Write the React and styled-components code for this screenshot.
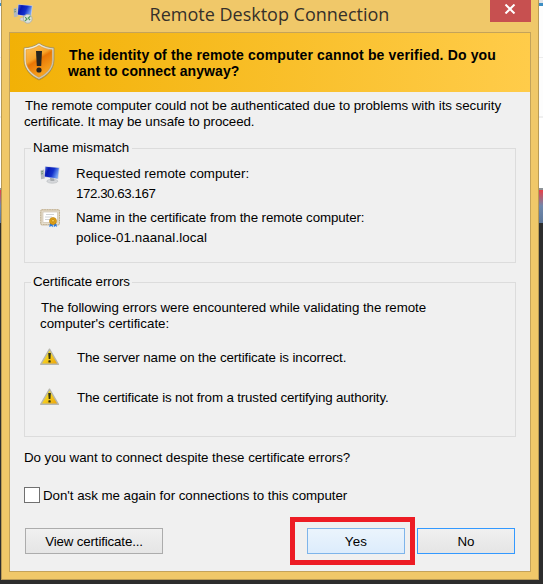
import React from "react";
import styled, { createGlobalStyle } from "styled-components";

const GlobalStyle = createGlobalStyle`
  * { box-sizing: border-box; }
  html, body { margin: 0; padding: 0; overflow: hidden; }
  body { font: 13.33px/16px "Liberation Sans", Arial, sans-serif; color: #000; }
`;

const Desktop = styled.div`
  width: 543px;
  height: 584px;
  display: flex;
  padding: 0 4px 4px 1px;
  background: linear-gradient(
    #dfe3e8 0 3px, #3d8fc4 3px 6px, #fdfdfd 6px 57px, #ececec 57px 58px,
    #fdfdfd 58px 116px, #efefef 116px 118px, #ffffff 118px 188px,
    #8f9498 188px 190px, #e84048 190px, #7088ac 206px, #5f7798 223px,
    #2d2d2d 223px
  );
`;

const Frame = styled.div`
  width: 538px;
  height: 580px;
  display: flex;
  flex-direction: column;
  padding: 0 7px 7px;
  border: 1px solid #b89a55;
  border-top: 0;
  background: #f0c869;
`;

const TitleBar = styled.header`
  height: 32px;
  display: flex;
  align-items: flex-start;
  justify-content: space-between;
  padding-left: 4px;
`;

const Title = styled.h1`
  margin: 2px 0 0 16px;
  font: 400 18px/24px "Open Sans", "Noto Sans", sans-serif;
  color: #35302a;
  white-space: nowrap;
`;

const CloseButton = styled.button`
  width: 41px;
  height: 22px;
  padding: 0 0 5px;
  border: 0;
  display: flex;
  align-items: center;
  justify-content: center;
  background: #c75050;
`;

const Content = styled.main`
  flex: 1;
  display: flex;
  flex-direction: column;
  border: 1px solid #c4a35a;
  background: #f0f0f0;
`;

const Banner = styled.div`
  height: 59px;
  display: flex;
  padding: 9px 0 0 12px;
  background: linear-gradient(90deg, #f2b106, #ffcc4a);
`;

const BannerText = styled.div`
  padding: 5px 0 0 12px;
  font-size: 14px;
  font-weight: 700;
`;

const Line = styled.div`
  height: 16px;
  white-space: nowrap;
  letter-spacing: ${(p) => p.$track || 0}px;
  margin-left: ${(p) => p.$indent || 0}px;
`;

const Body = styled.div`
  flex: 1;
  display: flex;
  flex-direction: column;
  padding: 6px 14px 0;
`;

const Group = styled.fieldset`
  width: 492px;
  height: ${(p) => p.$height}px;
  margin: ${(p) => p.$gap}px 0 0;
  padding: 11px 15px 0;
  border: 1px solid #dcdcdc;
`;

const Legend = styled.legend`
  height: 14px;
  width: 101px;
  margin-left: -9px;
  padding-left: 2px;
  line-height: 14px;
  white-space: nowrap;
  letter-spacing: ${(p) => p.$track || 0}px;
`;

const Entry = styled.div`
  display: flex;
  height: ${(p) => p.$height}px;
  gap: 16px;
`;

const EntryText = styled.div`
  display: flex;
  flex-direction: column;
  gap: 4px;
`;

const ErrorList = styled.div`
  margin-top: 18px;
`;

const Question = styled.div`
  margin-top: 13px;
`;

const CheckRow = styled.label`
  display: flex;
  align-items: flex-start;
  gap: 3px;
  height: 17px;
  margin-top: 21px;
`;

const CheckText = styled(Line)`
  margin-top: 1px;
`;

const CheckBox = styled.input`
  appearance: none;
  width: 16px;
  height: 16px;
  margin: 0;
  border: 1px solid #707070;
  background: #fff;
`;

const Actions = styled.footer`
  display: flex;
  align-items: center;
  height: 48px;
  margin-top: 13px;
  padding-left: 1px;
`;

const Button = styled.button`
  width: ${(p) => p.$width}px;
  height: 26px;
  padding: 2px 0 0;
  font: inherit;
  color: #000;
  letter-spacing: ${(p) => p.$track || 0}px;
  border: 1px solid ${(p) => (p.$hot ? "#7eb4ea" : p.$focus ? "#3399ff" : "#acacac")};
  background: ${(p) => (p.$hot ? "linear-gradient(#ebf4fc, #dcecfc)" : "linear-gradient(#f0f0f0, #e5e5e5)")};
`;

const Highlight = styled.div`
  width: 125px;
  height: 48px;
  margin: 0 2px 0 127px;
  border: 5px solid #ed1c24;
  display: flex;
  align-items: center;
  padding-left: 12px;
`;

const Icon = styled.svg`
  display: block;
  flex: none;
  margin-top: ${(p) => p.$top || 0}px;
`;

function ComputerArt({ id }) {
  return (
    <>
      <defs>
        <linearGradient id={id} x1="0" y1="0" x2="1" y2=".35">
          <stop offset="0" stopColor="#4a66d8" />
          <stop offset=".3" stopColor="#0718b4" />
          <stop offset=".65" stopColor="#1230cc" />
          <stop offset="1" stopColor="#6f9cf0" />
        </linearGradient>
      </defs>
      <path d="M.5 4.500l3.500-1 .8 9-3.800.8z" fill="#b4b8bc" />
      <path d="M1 6l2-.5M1 8l2-.5" stroke="#6f9679" />
      <ellipse cx="12.300" cy="15.200" rx="5.500" ry="2" fill="#d5d7da" stroke="#b7babd" strokeWidth=".6" />
      <path d="M10 12h4l.5 3h-4z" fill="#a5a9ad" />
      <path d="M5 .3L19.700 1.500 18.200 13.300 4 11z" fill="#c4cce0" />
      <path d="M5.500.8L18.900 2 17.500 12.400 4.700 10.400z" fill={`url(#${id})`} />
    </>
  );
}

function ComputerIcon() {
  return (
    <Icon width="20" height="20" viewBox="0 0 20 20"><ComputerArt id="screen" /></Icon>
  );
}

function RemoteIcon() {
  return (
    <Icon width="20" height="20" viewBox="0 0 20 20" $top={4}>
      <ComputerArt id="remoteScreen" />
      <circle cx="14.700" cy="14.800" r="4.400" fill="#dce1dc" stroke="#a9ada8" strokeWidth=".8" />
      <path d="M12.200 13.200l1.800 2-2.200 1.800M17.400 12.200l-2.200 1.800 1.900 2" fill="none" stroke="#4d9a58" strokeWidth="1.100" />
    </Icon>
  );
}

function ShieldIcon() {
  return (
    <Icon width="34" height="40" viewBox="0 0 34 40">
      <defs>
        <linearGradient id="shield" x1="0" y1="0" x2=".5" y2="1">
          <stop offset="0" stopColor="#ffc45b" />
          <stop offset=".45" stopColor="#f8a52b" />
          <stop offset=".55" stopColor="#e97605" />
          <stop offset="1" stopColor="#f8a51f" />
        </linearGradient>
        <linearGradient id="shieldRim" x1="0" y1="0" x2="1" y2="1">
          <stop offset="0" stopColor="#fffbea" />
          <stop offset="1" stopColor="#b9b6a5" />
        </linearGradient>
      </defs>
      <path d="M17 2C13 5 7 6.500 2 6.500v12c0 9.500 7 16.500 15 20 8-3.500 15-10.500 15-20v-12C27 6.500 21 5 17 2z" fill="#906514" opacity=".4" />
      <path d="M17 1C13 4 7 5.800 2 5.800v12.200c0 9 7 16 15 19.500 8-3.500 15-10.500 15-19.500V5.800C27 5.800 21 4 17 1z" fill="url(#shieldRim)" stroke="#a08b57" strokeWidth=".8" />
      <path d="M17 3.500C13.500 6 8.500 7.600 4 7.800V18c0 8 6 14 13 17.200C24 32 30 26 30 18V7.800C25.500 7.600 20.500 6 17 3.500z" fill="url(#shield)" stroke="#df9125" strokeWidth=".6" />
      <path d="M14 9h6l-.8 15h-4.400z" fill="#29251e" />
      <circle cx="17" cy="28" r="2.600" fill="#29251e" />
    </Icon>
  );
}

function CertificateIcon() {
  return (
    <Icon width="20" height="20" viewBox="0 0 20 20" $top={-1}>
      <rect x=".8" y=".8" width="18.600" height="15" rx="1" fill="#e7dfce" stroke="#b5a17d" />
      <rect x=".8" y=".8" width="18.600" height="15" fill="none" stroke="#e2d9c8" strokeDasharray="1 1.500" />
      <rect x="3" y="3" width="14.500" height="10.500" fill="#fff" stroke="#c6baa4" strokeWidth=".6" />
      <path d="M6 5.500h8M5 8h7M5 10.500h5" stroke="#c3c6ca" strokeWidth=".8" />
      <path d="M10.200 13L9.200 18l2.200-1 1.400 1.200v-4zM13.800 14v4.200l1.600-1.200 1.800 1-1.700-5z" fill="#2979df" />
      <circle cx="13" cy="12" r="3.500" fill="#dfa218" stroke="#b57a08" strokeWidth=".6" />
      <circle cx="13" cy="11.700" r="1.400" fill="#f4cb51" stroke="#aa6d05" strokeWidth=".5" />
    </Icon>
  );
}

function WarningIcon() {
  return (
    <Icon width="20" height="18" viewBox="0 0 20 18" $top={-2}>
      <defs>
        <linearGradient id="warning" x1="0" y1="0" x2="1" y2="1">
          <stop offset=".2" stopColor="#f5e12a" />
          <stop offset=".55" stopColor="#f4c91b" />
          <stop offset="1" stopColor="#eb9c08" />
        </linearGradient>
      </defs>
      <path d="M9.500 1.200L18.400 16.300H.7z" fill="url(#warning)" stroke="#b7b7ae" strokeWidth="1.400" strokeLinejoin="round" />
      <path d="M8.200 5h2.700l-.5 6H8.700z" fill="#303015" />
      <rect x="8.400" y="12.300" width="2.300" height="2.200" rx=".6" fill="#303015" />
    </Icon>
  );
}

export default function App() {
  return (
    <>
      <GlobalStyle />
      <Desktop>
        <Frame>
          <TitleBar>
            <RemoteIcon />
            <Title>Remote Desktop Connection</Title>
            <CloseButton aria-label="Close">
              <svg width="12" height="10" viewBox="0 0 12 10">
                <path d="M1.500.5l9 9M10.500.5l-9 9" stroke="#fff" strokeWidth="2" />
              </svg>
            </CloseButton>
          </TitleBar>
          <Content>
            <Banner>
              <ShieldIcon />
              <BannerText>
                <Line $indent={1} $track={0.15}>The identity of the remote computer cannot be verified. Do you</Line>
                <Line $track={0.08}>want to connect anyway?</Line>
              </BannerText>
            </Banner>
            <Body>
              <Line $indent={1} $track={-0.06}>The remote computer could not be authenticated due to problems with its security</Line>
              <Line $track={-0.07}>certificate. It may be unsafe to proceed.</Line>
              <Group $height={122} $gap={11}>
                <Legend>Name mismatch</Legend>
                <Entry $height={44}>
                  <ComputerIcon />
                  <EntryText>
                    <Line $track={0.02}>Requested remote computer:</Line>
                    <Line $track={-0.45}>172.30.63.167</Line>
                  </EntryText>
                </Entry>
                <Entry $height={44}>
                  <CertificateIcon />
                  <EntryText>
                    <Line $track={-0.1}>Name in the certificate from the remote computer:</Line>
                    <Line $track={0.1}>police-01.naanal.local</Line>
                  </EntryText>
                </Entry>
              </Group>
              <Group $height={162} $gap={12}>
                <Legend $track={-0.09}>Certificate errors</Legend>
                <Line $indent={1} $track={-0.06}>The following errors were encountered while validating the remote</Line>
                <Line>computer's certificate:</Line>
                <ErrorList>
                  <Entry $height={40}>
                    <WarningIcon />
                    <Line $indent={1} $track={-0.1}>The server name on the certificate is incorrect.</Line>
                  </Entry>
                  <Entry $height={40}>
                    <WarningIcon />
                    <Line $indent={1} $track={-0.14}>The certificate is not from a trusted certifying authority.</Line>
                  </Entry>
                </ErrorList>
              </Group>
              <Question>
                <Line $track={-0.05}>Do you want to connect despite these certificate errors?</Line>
              </Question>
              <CheckRow>
                <CheckBox type="checkbox" />
                <CheckText $track={-0.04}>Don't ask me again for connections to this computer</CheckText>
              </CheckRow>
              <Actions>
                <Button $width={138} $track={-0.15}>View certificate...</Button>
                <Highlight>
                  <Button $width={98} $hot $track={0.3}>Yes</Button>
                </Highlight>
                <Button $width={98} $focus>No</Button>
              </Actions>
            </Body>
          </Content>
        </Frame>
      </Desktop>
    </>
  );
}
